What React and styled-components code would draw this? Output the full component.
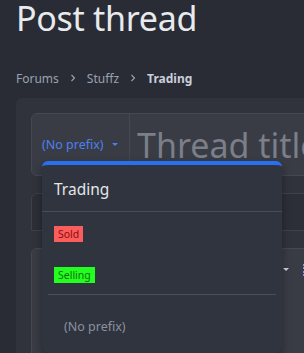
import React from 'react'
import styled, { createGlobalStyle } from 'styled-components'

const GlobalStyle = createGlobalStyle`
  html, body {
    margin: 0;
    background: #292c35;
    font-family: "Noto Sans", "Open Sans", sans-serif;
  }
`

const Page = styled.div`
  width: 304px;
  height: 353px;
  overflow: hidden;
`

const Title = styled.h1`
  margin: 0;
  padding: 0 0 0 16px;
  height: 52px;
  font-size: 34px;
  line-height: 36px;
  font-weight: 400;
  color: #e8eaee;
  letter-spacing: -0.3px;
`

const Crumbs = styled.nav`
  display: flex;
  align-items: center;
  gap: 11px;
  padding: 6px 0 0 16px;
  height: 46px;
  box-sizing: border-box;
  font-size: 12px;
  color: #9ba2b2;
`

const Crumb = styled.span`
  font-weight: ${p => (p.$current ? 700 : 400)};
  color: ${p => (p.$current ? '#c9cfdb' : '#9ba2b2')};
`

const Chevron = () => (
  <svg width="6" height="8" viewBox="0 0 6 8">
    <path d="M1.5 1 L4.5 4 L1.5 7" fill="none" stroke="#9ba2b2" strokeWidth="1.1" />
  </svg>
)

const Block = styled.div`
  margin-left: 16px;
  width: 420px;
  background: #30333c;
  border-radius: 6px;
  padding: 15px;
  display: flex;
  flex-direction: column;
  gap: 17px;
`

const InputGroup = styled.div`
  position: relative;
  display: flex;
  height: 63px;
  background: #393c45;
  border: 1px solid #454851;
  border-radius: 6px;
  box-sizing: border-box;
`

const PrefixButton = styled.div`
  display: flex;
  align-items: center;
  gap: 8px;
  width: 98px;
  padding-left: 10px;
  box-sizing: border-box;
  border-right: 1px solid #454851;
  font-size: 12.5px;
  color: #4c80f0;
`

const Caret = styled.span`
  width: 0;
  height: 0;
  border-left: 3.5px solid transparent;
  border-right: 3.5px solid transparent;
  border-top: 3.5px solid ${p => p.$color || '#4c80f0'};
`

const TitleInput = styled.div`
  display: flex;
  align-items: center;
  padding-left: 7px;
  font-size: 34px;
  color: #7b7f89;
  white-space: nowrap;
`

const Menu = styled.div`
  position: absolute;
  left: 10px;
  top: 47px;
  width: 240px;
  height: 192px;
  box-sizing: border-box;
  background: #30343e;
  border-top: 4px solid #2a6ff0;
  border-radius: 6px;
  box-shadow: 0 4px 10px rgba(0, 0, 0, 0.35);
  display: flex;
  flex-direction: column;
  z-index: 5;
`

const MenuHeader = styled.div`
  display: flex;
  align-items: center;
  height: 47px;
  padding: 2px 0 0 12px;
  box-sizing: border-box;
  font-size: 15.5px;
  color: #e4e6ea;
  border-bottom: 1px solid #484c56;
`

const MenuItem = styled.div`
  display: flex;
  align-items: center;
  height: ${p => (p.$plain ? '58px' : '41px')};
  padding: ${p => (p.$plain ? '4px 0 0 22px' : '2px 0 0 12px')};
  box-sizing: border-box;
  font-size: 12.5px;
  color: #8a91a1;
`

const MenuDivider = styled.div`
  height: 1px;
  margin: 0 6px;
  background: #4a4e58;
`

const Label = styled.span`
  display: inline-block;
  padding: 0 4px;
  height: 16px;
  line-height: 16px;
  font-size: 10.5px;
  background: ${p => p.$bg};
  color: ${p => p.$fg};
`

const Section = styled.div`
  height: 38px;
  box-sizing: border-box;
  background: #2c2f38;
  border: 1px solid #3e414a;
  border-radius: 6px 6px 0 0;
`

const Editor = styled.div`
  height: 160px;
  background: #393c45;
  border: 1px solid #454851;
  border-radius: 6px;
  box-sizing: border-box;
`

const Toolbar = styled.div`
  display: flex;
  align-items: center;
  height: 41px;
  padding-left: 251px;
  gap: 14px;
`

const ToolIcon = styled.span`
  width: 12px;
  height: 12px;
  border: 2px dotted #7d9be8;
  box-sizing: border-box;
`

export default function App() {
  return (
    <Page>
      <GlobalStyle />
      <Title>Post thread</Title>
      <Crumbs>
        <Crumb>Forums</Crumb>
        <Chevron />
        <Crumb>Stuffz</Crumb>
        <Chevron />
        <Crumb $current>Trading</Crumb>
      </Crumbs>
      <Block>
        <InputGroup>
          <PrefixButton>
            (No prefix) <Caret />
          </PrefixButton>
          <TitleInput>Thread title</TitleInput>
          <Menu>
            <MenuHeader>Trading</MenuHeader>
            <MenuItem>
              <Label $bg="#fb5c5c" $fg="#8c0c0c">Sold</Label>
            </MenuItem>
            <MenuItem>
              <Label $bg="#22ff1e" $fg="#136b13">Selling</Label>
            </MenuItem>
            <MenuDivider />
            <MenuItem $plain>(No prefix)</MenuItem>
          </Menu>
        </InputGroup>
        <Section />
        <Editor>
          <Toolbar>
            <Caret $color="#d0d3da" />
            <ToolIcon />
          </Toolbar>
        </Editor>
      </Block>
    </Page>
  )
}
